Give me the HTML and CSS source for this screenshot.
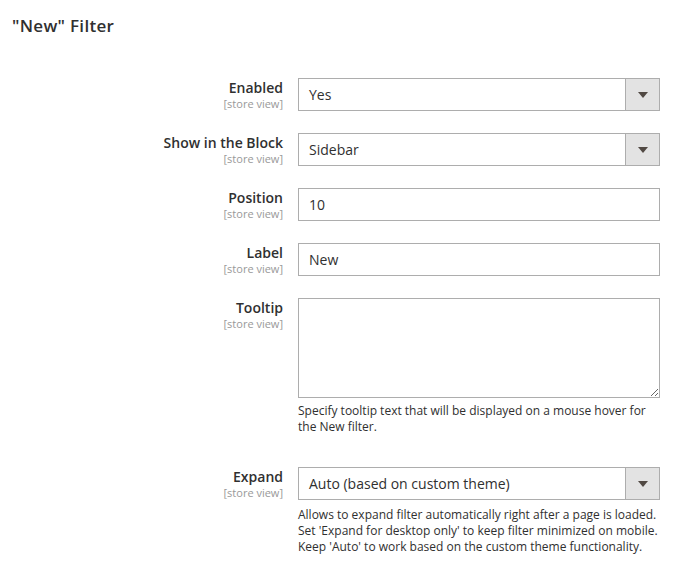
FILE: index.html
```html
<!DOCTYPE html>
<html>
<head>
<meta charset="utf-8">
<link rel="stylesheet" href="styles.css">
</head>
<body>
<div class="page">
  <h2 class="section-title">"New" Filter</h2>
  <div class="form">
    <div class="field">
      <div class="label"><span class="label-text">Enabled</span><span class="scope">[store view]</span></div>
      <div class="control">
        <div class="select"><span class="select-value">Yes</span><span class="select-arrow"><span class="tri"></span></span></div>
      </div>
    </div>
    <div class="field">
      <div class="label"><span class="label-text">Show in the Block</span><span class="scope">[store view]</span></div>
      <div class="control">
        <div class="select"><span class="select-value">Sidebar</span><span class="select-arrow"><span class="tri"></span></span></div>
      </div>
    </div>
    <div class="field">
      <div class="label"><span class="label-text">Position</span><span class="scope">[store view]</span></div>
      <div class="control"><input class="input" type="text" value="10"></div>
    </div>
    <div class="field">
      <div class="label"><span class="label-text">Label</span><span class="scope">[store view]</span></div>
      <div class="control"><input class="input" type="text" value="New"></div>
    </div>
    <div class="field">
      <div class="label"><span class="label-text">Tooltip</span><span class="scope">[store view]</span></div>
      <div class="control">
        <textarea class="textarea"></textarea>
        <p class="note">Specify tooltip text that will be displayed on a mouse hover for the New filter.</p>
      </div>
    </div>
    <div class="field">
      <div class="label"><span class="label-text">Expand</span><span class="scope">[store view]</span></div>
      <div class="control">
        <div class="select"><span class="select-value">Auto (based on custom theme)</span><span class="select-arrow"><span class="tri"></span></span></div>
        <p class="note note-select">Allows to expand filter automatically right after a page is loaded. Set 'Expand for desktop only' to keep filter minimized on mobile. Keep 'Auto' to work based on the custom theme functionality.</p>
      </div>
    </div>
  </div>
</div>
</body>
</html>
```

FILE: styles.css
```css
html, body {
  margin: 0;
  padding: 0;
  background: #ffffff;
}
body {
  font-family: "Open Sans", "Noto Sans", "Liberation Sans", sans-serif;
  color: #303030;
  font-size: 14px;
}
.page {
  padding: 15px 0 0 12px;
}
.section-title {
  margin: 0;
  font-size: 17px;
  font-weight: 600;
  line-height: 22px;
  color: #303030;
  letter-spacing: 0.3px;
}
.form {
  margin-top: 41px;
  display: flex;
  flex-direction: column;
  gap: 22px;
}
.field {
  display: grid;
  grid-template-columns: 271px 362px;
  column-gap: 15px;
  align-items: start;
}
.label {
  display: flex;
  flex-direction: column;
  align-items: flex-end;
  text-align: right;
}
.label-text {
  font-size: 14px;
  font-weight: 600;
  line-height: 19px;
  color: #303030;
}
.scope {
  font-size: 11px;
  line-height: 13px;
  color: #999999;
}
.control {
  display: flex;
  flex-direction: column;
}
.select {
  display: flex;
  height: 33px;
  box-sizing: border-box;
  border: 1px solid #adadad;
  background: #ffffff;
}
.select-value {
  flex: 1;
  padding: 0 10px;
  line-height: 31px;
  font-size: 14px;
  color: #303030;
}
.select-arrow {
  width: 33px;
  border-left: 1px solid #adadad;
  background: #e3e3e3;
  display: flex;
  align-items: center;
  justify-content: center;
}
.tri {
  width: 0;
  height: 0;
  border-left: 5px solid transparent;
  border-right: 5px solid transparent;
  border-top: 6px solid #514943;
  margin-top: 1px;
}
.input {
  height: 33px;
  box-sizing: border-box;
  border: 1px solid #adadad;
  padding: 0 10px;
  font-family: inherit;
  font-size: 14px;
  color: #303030;
  margin: 0;
  outline: none;
  border-radius: 0;
}
.textarea {
  height: 100px;
  box-sizing: border-box;
  border: 1px solid #adadad;
  margin: 0;
  padding: 8px 10px;
  font-family: inherit;
  font-size: 14px;
  border-radius: 0;
  resize: vertical;
  display: block;
}
.note {
  margin: 5px 0 10px 0;
  font-size: 12px;
  line-height: 16px;
  color: #303030;
}
.note-select {
  margin-top: 7px;
}
```
